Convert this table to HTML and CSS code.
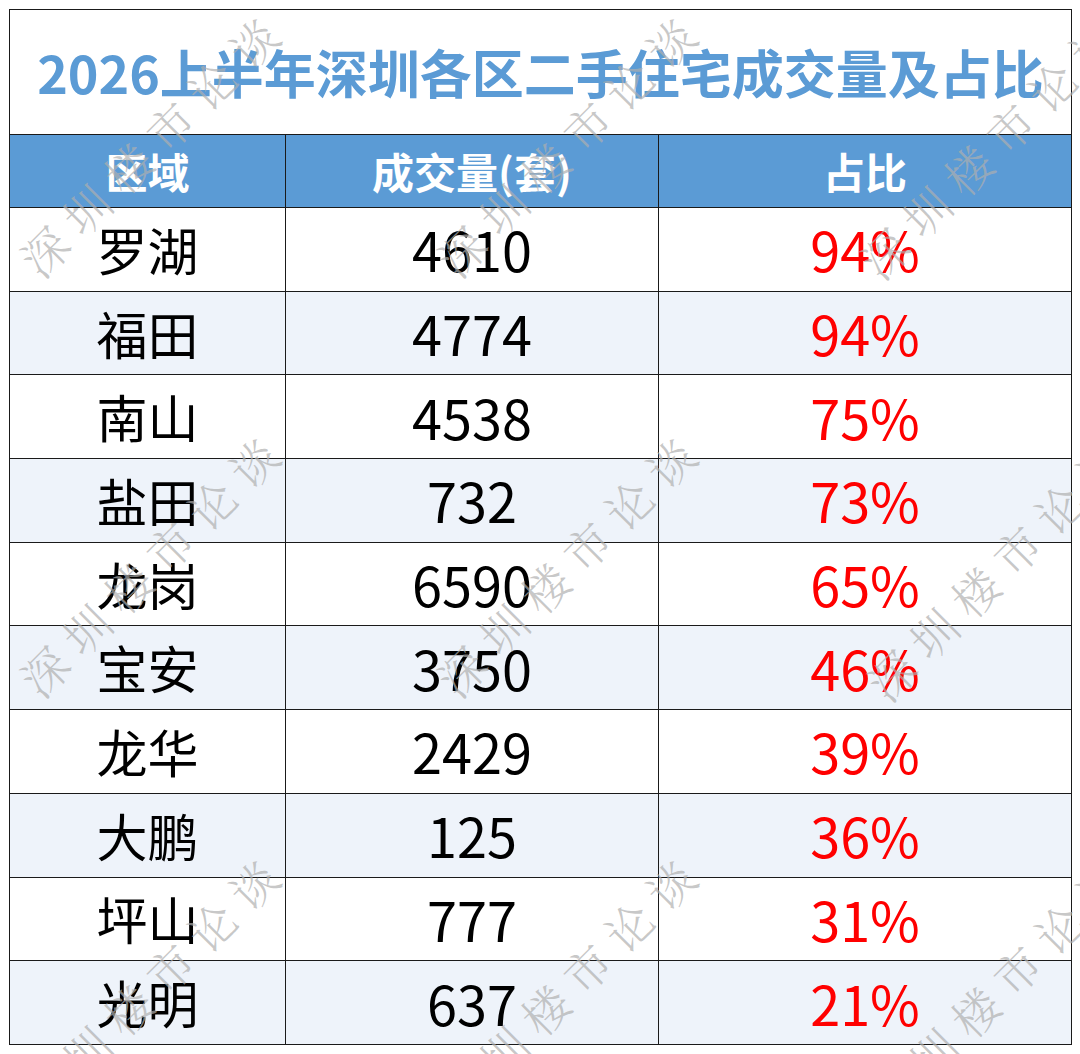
FILE: index.html
```html
<!DOCTYPE html>
<html lang="zh-CN">
<head>
<meta charset="utf-8">
<title>2026上半年深圳各区二手住宅成交量及占比</title>
<link rel="stylesheet" href="styles.css">
</head>
<body>
<div class="page">
  <table class="sheet">
    <colgroup>
      <col class="c1"><col class="c2"><col class="c3">
    </colgroup>
    <tr class="title-row"><td colspan="3" class="title">2026上半年深圳各区二手住宅成交量及占比</td></tr>
    <tr class="head-row"><th>区域</th><th>成交量(套)</th><th>占比</th></tr>
    <tr><td class="zone">罗湖</td><td class="num">4610</td><td class="pct">94%</td></tr>
    <tr class="alt"><td class="zone">福田</td><td class="num">4774</td><td class="pct">94%</td></tr>
    <tr><td class="zone">南山</td><td class="num">4538</td><td class="pct">75%</td></tr>
    <tr class="alt"><td class="zone">盐田</td><td class="num">732</td><td class="pct">73%</td></tr>
    <tr><td class="zone">龙岗</td><td class="num">6590</td><td class="pct">65%</td></tr>
    <tr class="alt"><td class="zone">宝安</td><td class="num">3750</td><td class="pct">46%</td></tr>
    <tr><td class="zone">龙华</td><td class="num">2429</td><td class="pct">39%</td></tr>
    <tr class="alt"><td class="zone">大鹏</td><td class="num">125</td><td class="pct">36%</td></tr>
    <tr><td class="zone">坪山</td><td class="num">777</td><td class="pct">31%</td></tr>
    <tr class="alt"><td class="zone">光明</td><td class="num">637</td><td class="pct">21%</td></tr>
  </table>
  <div class="watermarks" aria-hidden="true">
    <span class="wm" style="left:148px;top:146px">深圳楼市论谈</span>
    <span class="wm" style="left:565px;top:146px">深圳楼市论谈</span>
    <span class="wm" style="left:988px;top:148px">深圳楼市论谈</span>
    <span class="wm" style="left:148px;top:566px">深圳楼市论谈</span>
    <span class="wm" style="left:565px;top:566px">深圳楼市论谈</span>
    <span class="wm" style="left:995px;top:570px">深圳楼市论谈</span>
    <span class="wm" style="left:148px;top:988px">深圳楼市论谈</span>
    <span class="wm" style="left:565px;top:988px">深圳楼市论谈</span>
    <span class="wm" style="left:995px;top:990px">深圳楼市论谈</span>
  </div>
</div>
</body>
</html>
```

FILE: styles.css
```css
html, body {
  margin: 0;
  padding: 0;
  background: #ffffff;
}

.page {
  position: relative;
  width: 1080px;
  height: 1054px;
  padding: 9px;
  box-sizing: border-box;
  overflow: hidden;
  font-family: "Noto Sans CJK SC", "Noto Sans", sans-serif;
}

.sheet {
  width: 1062px;
  border-collapse: collapse;
  table-layout: fixed;
  border: 1.5px solid #1a1a1a;
}

.c1 { width: 276px; }
.c2 { width: 373px; }
.c3 { width: 413px; }

.sheet td, .sheet th {
  border: 1px solid #1a1a1a;
  padding: 0;
  text-align: center;
  vertical-align: middle;
}

.title-row { height: 125px; }

.title {
  font-size: 52px;
  font-weight: 700;
  color: #5b9bd5;
  line-height: 1;
  padding-bottom: 4px;
}

.head-row { height: 73px; }

.head-row th {
  background: #5b9bd5;
  color: #ffffff;
  font-size: 42px;
  font-weight: 700;
  line-height: 1;
}

.sheet tr:not(.title-row):not(.head-row) { height: 83.7px; }

.sheet tr.alt td { background: #eef3fa; }

.zone {
  font-size: 51px;
  color: #000000;
  line-height: 1;
}

.num {
  font-size: 54px;
  color: #000000;
  line-height: 1;
}

.pct {
  font-size: 54px;
  color: #ff0000;
  line-height: 1;
}

.watermarks {
  position: absolute;
  inset: 0;
  pointer-events: none;
}

.wm {
  position: absolute;
  transform: translate(-50%, -50%) rotate(-45deg);
  white-space: nowrap;
  font-family: "Noto Serif CJK SC", "Noto Sans CJK SC", serif;
  font-weight: 300;
  font-size: 46px;
  letter-spacing: 13px;
  text-indent: 13px;
  color: rgba(175, 175, 175, 0.7);
  line-height: 1;
}
```
